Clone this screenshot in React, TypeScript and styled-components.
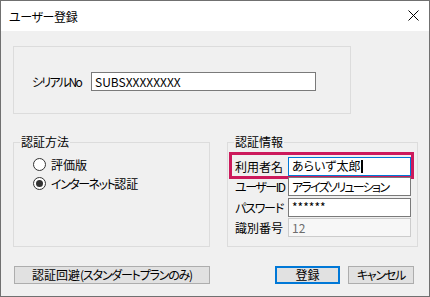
import React from 'react'
import styled, { createGlobalStyle } from 'styled-components'

const GlobalStyle = createGlobalStyle`
  html, body { margin: 0; padding: 0; background: #fff; }
  body {
    font-family: "Noto Sans CJK JP", "Noto Sans", sans-serif;
    font-size: 12px;
    color: #000;
    font-feature-settings: "palt";
  }
  * { box-sizing: border-box; }
`

// katakana in the original UI font is narrower than in Noto, squeeze it a bit
const Kana = styled.span<{ $ls?: number }>`
  letter-spacing: ${p => p.$ls ?? -1.2}px;
`

const Window = styled.div`
  width: 430px; height: 297px;
  border: 1px solid #707070;
  display: flex; flex-direction: column;
  overflow: hidden;
`

const TitleBar = styled.div`
  height: 30px; flex: none;
  background: #fff;
  display: flex; align-items: center; justify-content: space-between;
  padding: 1px 10px 0 8px;
  font-size: 12px;
`

const CloseIcon = styled.svg`
  width: 11px; height: 11px; display: block; margin-bottom: 2px;
`

const Body = styled.div`
  flex: 1;
  background: #f0f0f0;
  padding: 15px 11px 0 12px;
  display: flex; flex-direction: column;
`

const Group = styled.div<{ $w: number; $h: number }>`
  position: relative;
  width: ${p => p.$w}px; height: ${p => p.$h}px;
  border: 1px solid #dcdcdc;
`

const Legend = styled.span`
  position: absolute; top: -9px; left: 6px;
  padding: 0 1px;
  line-height: 16px;
  background: #f0f0f0;
  white-space: nowrap;
`

const SerialGroup = styled(Group)`
  display: flex; align-items: center;
  padding: 3px 0 0 18px;
`

const SerialLabel = styled.span`
  width: 59px; flex: none; line-height: 19px;
  white-space: nowrap;
`

const Field = styled.div<{ $w: number; $focus?: boolean; $disabled?: boolean }>`
  width: ${p => p.$w}px; height: 19px; flex: none;
  border: 1px solid ${p => (p.$focus ? '#0078d7' : p.$disabled ? '#cccccc' : '#7a7a7a')};
  background: ${p => (p.$disabled ? '#f7f7f7' : '#fff')};
  color: ${p => (p.$disabled ? '#6d6d6d' : '#000')};
  padding: 0 3px;
  display: flex; align-items: center;
  line-height: 16px; white-space: nowrap; overflow: hidden;
`

const Caret = styled.span`
  display: inline-block; width: 2px; height: 13px; flex: none;
  background: #000; margin-left: 1px;
`

const MiddleRow = styled.div`
  display: flex; gap: 17px;
  margin-top: 28px;
`

const RadioGroup = styled(Group)`
  padding: 12px 0 0 19px;
  display: flex; flex-direction: column;
`

const RadioRow = styled.label`
  height: 19px; display: flex; align-items: center; gap: 5px;
  white-space: nowrap;
`

const RadioDot = styled.span<{ $on?: boolean }>`
  width: 13px; height: 13px; border-radius: 50%;
  border: 1px solid #333; background: #fff;
  display: grid; place-items: center; flex: none;
  &::after {
    content: '';
    width: 7px; height: 7px; border-radius: 50%;
    background: ${p => (p.$on ? '#333' : 'transparent')};
  }
`

const InfoGroup = styled(Group)`
  padding: 14px 0 0 4px;
  display: flex; flex-direction: column; gap: 2px;
`

const InfoRow = styled.div<{ $mark?: boolean }>`
  position: relative;
  width: 179px; height: 18.5px;
  display: flex; align-items: center;
  &::after {
    content: '';
    display: ${p => (p.$mark ? 'block' : 'none')};
    position: absolute; top: -5px; left: -3px; right: -3px; bottom: -3px;
    border: 3px solid #cc1a5c;
    pointer-events: none;
  }
`

const InfoLabel = styled.span`
  width: 56px; flex: none; padding-left: 3px;
  white-space: nowrap;
`

const ButtonRow = styled.div`
  display: flex; justify-content: space-between;
  margin-top: 19px; padding: 0 4px 0 1px;
`

const ButtonGroup = styled.div`
  display: flex; gap: 8px;
`

const Button = styled.button<{ $w: number; $default?: boolean }>`
  width: ${p => p.$w}px; height: 18px;
  padding: 0; margin: 0;
  font: inherit; font-size: 12px; line-height: 14px;
  color: #000; white-space: nowrap;
  background: #e1e1e1;
  border: ${p => (p.$default ? '2px solid #0078d7' : '1px solid #adadad')};
`

export default function App() {
    return (
        <>
            <GlobalStyle />
            <Window>
                <TitleBar>
                    <Kana $ls={-0.4}>ユーザー登録</Kana>
                    <CloseIcon viewBox="0 0 11 11">
                        <path d="M0.5 0.5L10.5 10.5M10.5 0.5L0.5 10.5" stroke="#000" strokeWidth="1" fill="none" />
                    </CloseIcon>
                </TitleBar>
                <Body>
                    <SerialGroup $w={338} $h={68}>
                        <SerialLabel><Kana $ls={-1.7}>シリアルNo</Kana></SerialLabel>
                        <Field $w={225}>SUBSXXXXXXXX</Field>
                    </SerialGroup>

                    <MiddleRow>
                        <RadioGroup $w={197} $h={105}>
                            <Legend>認証方法</Legend>
                            <RadioRow><RadioDot /><span>評価版</span></RadioRow>
                            <RadioRow><RadioDot $on /><span><Kana $ls={-1.5}>インターネット</Kana>認証</span></RadioRow>
                        </RadioGroup>

                        <InfoGroup $w={191} $h={105}>
                            <Legend>認証情報</Legend>
                            <InfoRow $mark>
                                <InfoLabel>利用者名</InfoLabel>
                                <Field $w={123} $focus>あらいず太郎<Caret /></Field>
                            </InfoRow>
                            <InfoRow>
                                <InfoLabel><Kana $ls={-1.5}>ユーザーID</Kana></InfoLabel>
                                <Field $w={123}><Kana $ls={-1.7}>アライズソリューション</Kana></Field>
                            </InfoRow>
                            <InfoRow>
                                <InfoLabel><Kana $ls={-1.2}>パスワード</Kana></InfoLabel>
                                <Field $w={123}>******</Field>
                            </InfoRow>
                            <InfoRow>
                                <InfoLabel>識別番号</InfoLabel>
                                <Field $w={123} $disabled>12</Field>
                            </InfoRow>
                        </InfoGroup>
                    </MiddleRow>

                    <ButtonRow>
                        <Button $w={196}>認証回避<Kana>(スタンダートプランのみ)</Kana></Button>
                        <ButtonGroup>
                            <Button $w={65} $default>登録</Button>
                            <Button $w={66}><Kana>キャンセル</Kana></Button>
                        </ButtonGroup>
                    </ButtonRow>
                </Body>
            </Window>
        </>
    )
}
